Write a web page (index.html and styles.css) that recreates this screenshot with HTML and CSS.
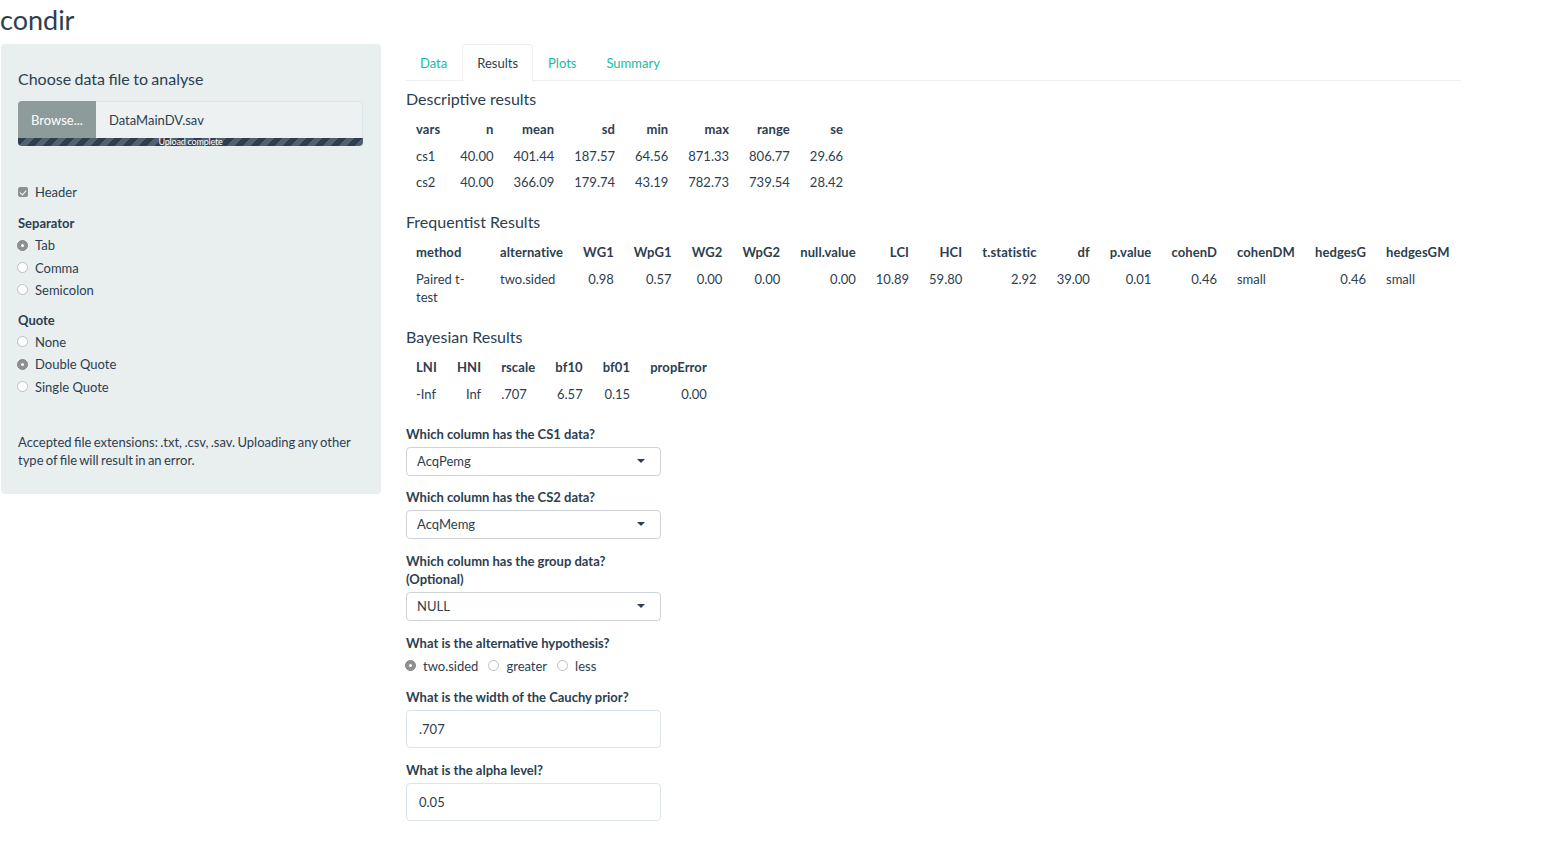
FILE: index.html
```html
<!DOCTYPE html>
<html lang="en">
<head>
<meta charset="utf-8">
<title>condir</title>
<link rel="stylesheet" href="styles.css">
</head>
<body>
<h1 class="title">condir</h1>
<div class="page">
  <aside class="well">
    <div class="file-label">Choose data file to analyse</div>
    <div class="file-group">
      <span class="browse">Browse...</span>
      <span class="file-name">DataMainDV.sav</span>
    </div>
    <div class="progress"><span>Upload complete</span></div>

    <div class="check-row"><span class="checkbox"></span>Header</div>

    <div class="group-label sep">Separator</div>
    <div class="radio-row"><span class="radio on"></span>Tab</div>
    <div class="radio-row"><span class="radio"></span>Comma</div>
    <div class="radio-row"><span class="radio"></span>Semicolon</div>

    <div class="group-label quote">Quote</div>
    <div class="radio-row"><span class="radio"></span>None</div>
    <div class="radio-row"><span class="radio on"></span>Double Quote</div>
    <div class="radio-row"><span class="radio"></span>Single Quote</div>

    <p class="note">Accepted file extensions: .txt, .csv, .sav. Uploading any other type of file will result in an error.</p>
  </aside>

  <main class="main">
    <ul class="tabs">
      <li><a>Data</a></li>
      <li class="active"><a>Results</a></li>
      <li><a>Plots</a></li>
      <li><a>Summary</a></li>
    </ul>

    <h4 class="section first">Descriptive results</h4>
    <table class="tbl">
      <thead>
        <tr><th class="l">vars</th><th>n</th><th>mean</th><th>sd</th><th>min</th><th>max</th><th>range</th><th>se</th></tr>
      </thead>
      <tbody>
        <tr><td class="l">cs1</td><td>40.00</td><td>401.44</td><td>187.57</td><td>64.56</td><td>871.33</td><td>806.77</td><td>29.66</td></tr>
        <tr><td class="l">cs2</td><td>40.00</td><td>366.09</td><td>179.74</td><td>43.19</td><td>782.73</td><td>739.54</td><td>28.42</td></tr>
      </tbody>
    </table>

    <h4 class="section">Frequentist Results</h4>
    <table class="tbl freq">
      <thead>
        <tr><th class="l method">method</th><th class="l">alternative</th><th>WG1</th><th>WpG1</th><th>WG2</th><th>WpG2</th><th>null.value</th><th>LCI</th><th>HCI</th><th>t.statistic</th><th>df</th><th>p.value</th><th>cohenD</th><th class="l">cohenDM</th><th>hedgesG</th><th class="l">hedgesGM</th></tr>
      </thead>
      <tbody>
        <tr><td class="l">Paired t-test</td><td class="l">two.sided</td><td>0.98</td><td>0.57</td><td>0.00</td><td>0.00</td><td>0.00</td><td>10.89</td><td>59.80</td><td>2.92</td><td>39.00</td><td>0.01</td><td>0.46</td><td class="l">small</td><td>0.46</td><td class="l">small</td></tr>
      </tbody>
    </table>

    <h4 class="section">Bayesian Results</h4>
    <table class="tbl">
      <thead>
        <tr><th class="l">LNI</th><th>HNI</th><th class="l">rscale</th><th>bf10</th><th>bf01</th><th>propError</th></tr>
      </thead>
      <tbody>
        <tr><td class="l">-Inf</td><td>Inf</td><td class="l">.707</td><td>6.57</td><td>0.15</td><td>0.00</td></tr>
      </tbody>
    </table>

    <div class="form-group first-group">
      <label class="flabel">Which column has the CS1 data?</label>
      <div class="select"><span>AcqPemg</span><span class="caret"></span></div>
    </div>
    <div class="form-group tight">
      <label class="flabel">Which column has the CS2 data?</label>
      <div class="select"><span>AcqMemg</span><span class="caret"></span></div>
    </div>
    <div class="form-group">
      <label class="flabel">Which column has the group data?<br>(Optional)</label>
      <div class="select"><span>NULL</span><span class="caret"></span></div>
    </div>
    <div class="form-group">
      <label class="flabel">What is the alternative hypothesis?</label>
      <div class="inline-radios">
        <span class="iradio"><span class="radio on"></span>two.sided</span>
        <span class="iradio"><span class="radio"></span>greater</span>
        <span class="iradio"><span class="radio"></span>less</span>
      </div>
    </div>
    <div class="form-group tight">
      <label class="flabel">What is the width of the Cauchy prior?</label>
      <div class="text-input">.707</div>
    </div>
    <div class="form-group">
      <label class="flabel">What is the alpha level?</label>
      <div class="text-input">0.05</div>
    </div>
  </main>
</div>
</body>
</html>
```

FILE: styles.css
```css
* { box-sizing: border-box; }

body {
  margin: 0;
  font-family: Lato, "Open Sans", "Liberation Sans", sans-serif;
  font-size: 13px;
  line-height: 18px;
  color: #2c3e50;
  background: #fff;
}

.title {
  margin: 0;
  padding: 3px 0 0 0;
  height: 44px;
  font-size: 27px;
  font-weight: 400;
  line-height: 34px;
}

.page {
  display: flex;
  align-items: flex-start;
}

/* Sidebar */
.well {
  width: 380px;
  margin-left: 1px;
  padding: 24px 18px 25px 17px;
  background: #e9eeef;
  border-radius: 4px;
}

.file-label {
  font-size: 16px;
  line-height: 22px;
  margin-bottom: 11px;
  word-spacing: -0.7px;
}

.file-group {
  display: flex;
  height: 37px;
}

.browse {
  width: 78px;
  background: #8d9b9b;
  color: #fff;
  display: flex;
  align-items: center;
  justify-content: center;
  border-radius: 4px 0 0 0;
  font-size: 13px;
}

.file-name {
  flex: 1;
  background: #edf1f2;
  border: 1px solid #dce4ec;
  border-left: none;
  border-bottom: none;
  border-radius: 0 4px 0 0;
  display: flex;
  align-items: center;
  padding-left: 13px;
}

.progress {
  height: 8px;
  border-radius: 0 0 4px 4px;
  background-color: #2c3e50;
  background-image: linear-gradient(-45deg, rgba(255,255,255,.18) 25%, transparent 25%, transparent 50%, rgba(255,255,255,.18) 50%, rgba(255,255,255,.18) 75%, transparent 75%, transparent);
  background-size: 16px 16px;
  display: flex;
  justify-content: center;
  align-items: center;
  color: #fff;
  font-size: 9px;
  line-height: 8px;
}

.progress span {
  display: block;
  line-height: 8px;
  letter-spacing: -0.2px;
}

.check-row {
  display: flex;
  align-items: center;
  height: 20px;
  margin-top: 36px;
}

.checkbox {
  width: 10px;
  height: 10px;
  border-radius: 2px;
  background: #8d9090;
  margin-right: 7px;
  position: relative;
}

.checkbox::after {
  content: "";
  position: absolute;
  left: 3px;
  top: 1.5px;
  width: 3px;
  height: 5px;
  border: solid #fff;
  border-width: 0 1.3px 1.3px 0;
  transform: rotate(40deg);
}

.group-label {
  font-weight: 700;
  line-height: 18px;
}

.group-label.sep { margin-top: 12px; margin-bottom: 2px; }
.group-label.quote { margin-top: 9.5px; margin-bottom: 2px; }

.radio-row {
  display: flex;
  align-items: center;
  height: 22.4px;
}

.radio-row .radio { margin-left: -1px; }

.radio {
  display: inline-block;
  width: 11px;
  height: 11px;
  border-radius: 50%;
  border: 1px solid #b9c0c4;
  background: #fff;
  margin-right: 7px;
  flex: none;
  position: relative;
}

.radio.on {
  background: #8e9092;
  border-color: #85888a;
}

.radio.on::after {
  content: "";
  position: absolute;
  left: 3px;
  top: 3px;
  width: 3px;
  height: 3px;
  border-radius: 50%;
  background: #fff;
}

.note {
  margin: 35px 0 0 0;
  line-height: 18px;
  word-spacing: -1px;
}

/* Main */
.main {
  margin-left: 25px;
  width: 1055px;
}

.tabs {
  list-style: none;
  margin: 0;
  padding: 0;
  display: flex;
  border-bottom: 1px solid #ecf0f1;
  height: 37px;
}

.tabs li {
  margin-bottom: -1px;
  margin-right: 0;
}

.tabs a {
  display: block;
  padding: 9px 14px;
  line-height: 18px;
  color: #18bc9c;
  border: 1px solid transparent;
  border-radius: 4px 4px 0 0;
}

.tabs li:first-child a { padding-left: 13px; }

.tabs li.active a {
  color: #2c3e50;
  background: #fff;
  border-color: #ecf0f1 #ecf0f1 transparent;
}

.section {
  margin: 15.5px 0 6px 0;
  font-size: 16px;
  font-weight: 400;
  line-height: 22px;
}

.section.first { margin-top: 7px; }

.tbl {
  border-collapse: collapse;
  border-spacing: 0;
}

.tbl th,
.tbl td {
  padding: 4px 10px;
  line-height: 18.5px;
  text-align: right;
  vertical-align: top;
  white-space: nowrap;
}

.tbl th { font-weight: 700; letter-spacing: 0.1px; }

.tbl .l { text-align: left; }

.freq { width: max-content; }

.freq td.l:first-child { white-space: normal; }

.freq .method { width: 84px; }

.form-group { margin-top: 13px; }
.form-group.tight { margin-top: 12px; }
.form-group.first-group { margin-top: 17.5px; }

.flabel {
  display: block;
  font-weight: 700;
  line-height: 18px;
  margin-bottom: 4px;
}

.select {
  width: 255px;
  height: 29px;
  border: 1px solid #cdd3d8;
  border-radius: 4px;
  display: flex;
  align-items: center;
  justify-content: space-between;
  padding: 0 15px 0 10px;
  background: #fff;
}

.caret {
  width: 0;
  height: 0;
  border-left: 4px solid transparent;
  border-right: 4px solid transparent;
  border-top: 4px solid #2c3e50;
}

.inline-radios {
  display: flex;
  align-items: center;
  height: 20px;
  margin-left: -1px;
}

.iradio {
  display: inline-flex;
  align-items: center;
  margin-right: 10px;
}

.text-input {
  width: 255px;
  height: 38px;
  border: 1px solid #dce4ec;
  border-radius: 4px;
  padding: 0 12px;
  display: flex;
  align-items: center;
}
```
